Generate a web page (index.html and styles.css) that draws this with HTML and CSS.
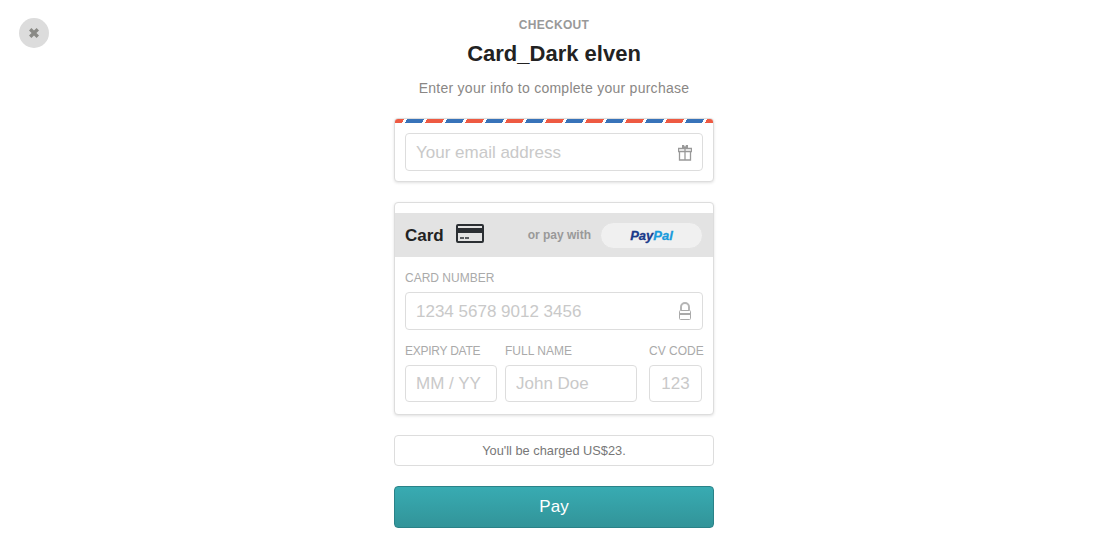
FILE: index.html
```html
<!DOCTYPE HTML>
<html>

<head>
    <title>Checkout</title>
    <link rel="stylesheet" href="styles.css">
</head>

<body>
    <button type="button" class="close" aria-label="Close">
        <svg width="10" height="10" viewBox="0 0 10 10">
            <path d="M2.4 0 5 2.6 7.6 0 10 2.4 7.4 5 10 7.6 7.6 10 5 7.4 2.4 10 0 7.6 2.6 5 0 2.4z" fill="#8a8a86" />
        </svg>
    </button>
    <main class="checkout">
        <h4 class="eyebrow">CHECKOUT</h4>
        <h1 class="title">Card_Dark elven</h1>
        <p class="subtitle">Enter your info to complete your purchase</p>

        <section class="box box-email">
            <div class="stripes"></div>
            <div class="field field-email">
                <input type="text" class="input" placeholder="Your email address" />
                <svg class="field-icon" width="14" height="16" viewBox="0 0 14 16">
                    <path d="M4 0h2l1 2 1-2h2v3H4z" fill="#999" />
                    <path d="M.5 3.500h13v3H.5zM1.500 6.500h11v8.500h-11zM7 3.500v11.500" fill="none" stroke="#999" stroke-width="1.300" />
                </svg>
            </div>
        </section>

        <section class="box box-card">
            <div class="tabs">
                <span class="tab-name">Card</span>
                <svg class="card-icon" width="28" height="19" viewBox="0 0 28 19">
                    <rect x="1" y="1" width="26" height="17" rx="1" fill="none" stroke="#2b2f33" stroke-width="2" />
                    <rect x="1" y="4" width="26" height="5" fill="#2b2f33" />
                    <path d="M4 14h4M9 14h4" stroke="#2b2f33" stroke-width="1.500" />
                </svg>
                <span class="or-pay">or pay with</span>
                <button type="button" class="paypal"><span class="pp-dark">Pay</span><span class="pp-light">Pal</span></button>
            </div>
            <div class="card-form">
                <label class="label">CARD NUMBER</label>
                <div class="field">
                    <input type="text" class="input" placeholder="1234 5678 9012 3456" />
                    <svg class="field-icon field-icon-lock" width="14" height="18" viewBox="0 0 14 18">
                        <path d="M3 8V5a4 4 0 0 1 8 0v3" fill="none" stroke="#b5b5b5" stroke-width="2" />
                        <rect x="1.500" y="8.500" width="11" height="9" rx="1" fill="#fff" stroke="#aaa" />
                        <path d="M2 12h10" stroke="#aaa" stroke-width="2" />
                    </svg>
                </div>
                <div class="row">
                    <div class="col col-expiry">
                        <label class="label label-tight">EXPIRY DATE</label>
                        <input type="text" class="input input-small" placeholder="MM / YY" />
                    </div>
                    <div class="col col-name">
                        <label class="label">FULL NAME</label>
                        <input type="text" class="input input-small" placeholder="John Doe" />
                    </div>
                    <div class="col col-cv">
                        <label class="label">CV CODE</label>
                        <input type="text" class="input input-small input-cv" placeholder="123" />
                    </div>
                </div>
            </div>
        </section>

        <div class="charge">You'll be charged US$23.</div>
        <button type="button" class="pay">Pay</button>
    </main>
</body>

</html>
```

FILE: styles.css
```css
* {
    box-sizing: border-box;
}

html,
body {
    height: 100%;
}

body {
    margin: 0;
    padding-left: 1px;
    background-color: #fff;
    font-family: "Liberation Sans", Arial, sans-serif;
    overflow: hidden;
}

.close {
    position: absolute;
    top: 18px;
    left: 19px;
    width: 30px;
    height: 30px;
    padding: 0;
    border: 0;
    border-radius: 50%;
    background-color: #dcdcdc;
    display: flex;
    align-items: center;
    justify-content: center;
}

.checkout {
    width: 320px;
    margin: 0 auto;
    padding-top: 18px;
}

.eyebrow {
    margin: 0;
    font-size: 12px;
    line-height: 14px;
    letter-spacing: 0.3px;
    font-weight: bold;
    color: #999;
    text-align: center;
}

.title {
    margin: 8px 0 0;
    font-size: 22px;
    line-height: 28px;
    font-weight: bold;
    color: #222;
    text-align: center;
}

.subtitle {
    margin: 11px 0 0;
    font-size: 14px;
    line-height: 18px;
    letter-spacing: 0.26px;
    color: #8a8785;
    text-align: center;
}

.box {
    background-color: #fff;
    border: 1px solid #ddd;
    border-radius: 4px;
    box-shadow: 0 1px 3px rgba(0, 0, 0, 0.12);
}

.box-email {
    height: 64px;
    margin-top: 21px;
    overflow: hidden;
}

.stripes {
    height: 4px;
    margin-bottom: 10px;
    background: repeating-linear-gradient(115deg,
            #ee5a42 -7.4px, #ee5a42 8px, #fff 8px, #fff 10.7px,
            #3873b9 10.7px, #3873b9 26.1px, #fff 26.1px, #fff 28.85px);
}

.field {
    position: relative;
}

.field-email {
    margin: 0 10px;
}

.field-icon {
    position: absolute;
    top: 12px;
    right: 11px;
}

.field-icon-lock {
    top: 10px;
}

.input {
    display: block;
    width: 100%;
    height: 38px;
    padding: 1px 10px 0;
    border: 1px solid #ddd;
    border-radius: 4px;
    background-color: #fff;
    font-family: inherit;
    font-size: 17px;
    color: #333;
}

.input::placeholder {
    color: #c9c9c9;
    opacity: 1;
}

.box-card {
    height: 213px;
    margin-top: 20px;
    padding-top: 10px;
}

.tabs {
    height: 44px;
    padding: 0 10px;
    background-color: #e3e3e3;
    display: flex;
    align-items: center;
}

.tab-name {
    padding-top: 2px;
    font-size: 17px;
    font-weight: bold;
    color: #222;
}

.card-icon {
    margin: -4px 0 0 12px;
}

.or-pay {
    margin-left: auto;
    font-size: 12px;
    font-weight: bold;
    color: #999;
}

.paypal {
    width: 103px;
    height: 27px;
    margin-left: 9px;
    padding: 0;
    border: 1px solid #e3e3e3;
    border-radius: 14px;
    background-color: #f0f0f0;
    font-family: inherit;
    font-size: 13px;
    font-style: italic;
    font-weight: bold;
    -webkit-text-stroke: 0.3px;
}

.pp-dark {
    color: #1a3a8a;
}

.pp-light {
    color: #1a9bdc;
}

.card-form {
    padding: 14px 10px 0;
}

.label {
    display: block;
    margin-bottom: 7px;
    font-size: 12px;
    line-height: 14px;
    color: #aaa;
    white-space: nowrap;
}

.label-tight {
    letter-spacing: -0.25px;
}

.row {
    margin-top: 14px;
    display: flex;
}

.col-expiry {
    width: 92px;
}

.col-name {
    width: 132px;
    margin-left: 8px;
}

.col-cv {
    width: 54px;
    margin-left: 12px;
}

.input-small {
    height: 37px;
    padding-top: 0;
}

.input-cv {
    width: 53px;
    text-align: center;
}

.charge {
    height: 31px;
    margin-top: 20px;
    border: 1px solid #ddd;
    border-radius: 4px;
    font-size: 12.8px;
    line-height: 30px;
    color: #777;
    text-align: center;
}

.pay {
    display: block;
    width: 100%;
    height: 42px;
    margin-top: 20px;
    padding: 0;
    border: 1px solid #2a8288;
    border-radius: 4px;
    background: linear-gradient(#38abb2, #329499);
    font-family: inherit;
    font-size: 17px;
    color: #fff;
}
```
